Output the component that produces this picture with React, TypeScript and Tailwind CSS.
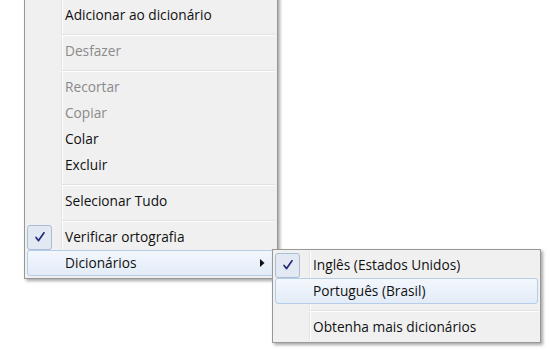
import React from "react";

const font = { fontFamily: '"Open Sans", "Noto Sans", sans-serif' };

function Check() {
  return (
    <div className="flex h-[25px] w-[25px] items-center justify-center rounded-[3px] border border-[#a9bdd6] bg-[#e2e9f3]">
      <svg width="12" height="12" viewBox="0 0 12 12">
        <path d="M2 6.5 L4.6 9.6 L10 1.8" fill="none" stroke="#23297a" strokeWidth="1.7" strokeLinecap="round" strokeLinejoin="round" />
      </svg>
    </div>
  );
}

type ItemProps = {
  label: string;
  disabled?: boolean;
  checked?: boolean;
  active?: boolean;
  arrow?: boolean;
  hidden?: boolean;
};

function Item({ label, disabled, checked, active, arrow, hidden }: ItemProps) {
  return (
    <div
      className={
        "flex h-[26px] items-center rounded-[3px] border " +
        (active
          ? "border-[#b6cde9] bg-gradient-to-b from-[#f3f7fd] to-[#e2ebf7]"
          : "border-transparent")
      }
    >
      <div className="flex w-[37px] shrink-0 items-center">
        {checked ? <div className="-ml-px"><Check /></div> : null}
      </div>
      <div
        className={
          "flex-1 text-[13.7px] leading-none " +
          (hidden ? "invisible " : "") +
          (disabled ? "text-[#8a8a8a]" : "text-[#111]")
        }
      >
        {label}
      </div>
      {arrow ? (
        <svg width="5" height="8" viewBox="0 0 5 8" className="mr-[9px]">
          <path d="M0 0 L4.5 4 L0 8 Z" fill="#111" />
        </svg>
      ) : null}
    </div>
  );
}

function Sep() {
  return (
    <div className="flex h-[10px] flex-col pl-[34px] pt-[6px]">
      <div className="h-px bg-[#e0e0e0]" />
      <div className="h-px bg-white" />
    </div>
  );
}

const gutter =
  "bg-[linear-gradient(to_right,#f0f0f0_34px,#e2e3e3_34px,#e2e3e3_35px,#ffffff_35px,#ffffff_36px,#f0f0f0_36px)]";

export default function App() {
  return (
    <div className="relative h-[350px] w-[550px] overflow-hidden bg-white" style={font}>
      <div className="ml-[24px] mt-[-27px] w-[254px] border border-[#979797] bg-[#f0f0f0] p-[2px] shadow-[2px_2px_3px_rgba(0,0,0,0.35)]">
        <div className={gutter}>
          <Item label="Sugestão" hidden />
          <Item label="Adicionar ao dicionário" />
          <Sep />
          <Item label="Desfazer" disabled />
          <Sep />
          <Item label="Recortar" disabled />
          <Item label="Copiar" disabled />
          <Item label="Colar" />
          <Item label="Excluir" />
          <Sep />
          <Item label="Selecionar Tudo" />
          <Sep />
          <Item label="Verificar ortografia" checked />
          <Item label="Dicionários" active arrow />
        </div>
      </div>

      <div className="absolute left-[272px] top-[249px] w-[269px] border border-[#979797] bg-[#f0f0f0] p-[2px] shadow-[2px_2px_3px_rgba(0,0,0,0.35)]">
        <div className={gutter}>
          <Item label="Inglês (Estados Unidos)" checked />
          <Item label="Português (Brasil)" active />
          <Sep />
          <Item label="Obtenha mais dicionários" />
        </div>
      </div>
    </div>
  );
}
